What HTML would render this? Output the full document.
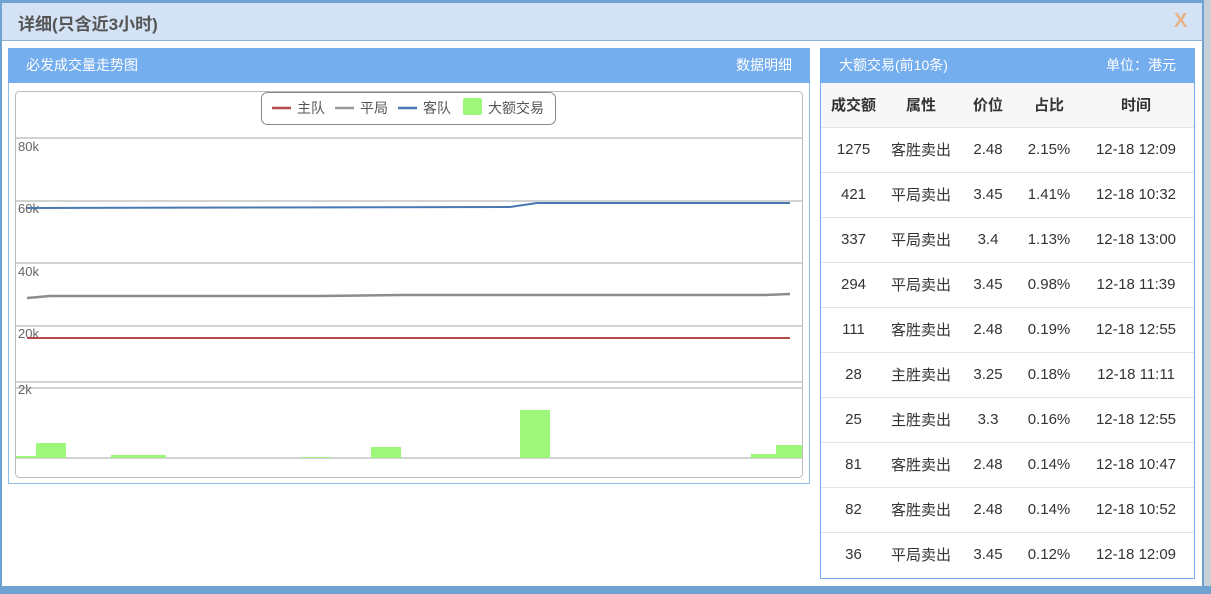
<!DOCTYPE html>
<html><head><meta charset="utf-8"><style>
*{margin:0;padding:0;box-sizing:border-box}
body{width:1211px;height:594px;overflow:hidden;background:#fff;font-family:"Liberation Sans","Noto Sans CJK SC",sans-serif;position:relative}
.abs{position:absolute}
.hd{background:#75aeee;color:#fff;font-size:14px;line-height:35px}
table{border-collapse:collapse;width:100%}
td{height:45px;text-align:center;font-size:15px;color:#333;border-top:1px solid #e4e4e4}
th{height:44px;font-size:15px;color:#333;background:#f7f7f7;font-weight:bold}
</style></head><body>
<div class="abs" style="left:0;top:0;width:1211px;height:3px;background:#6ea2d0"></div>
<div class="abs" style="left:0;top:0;width:2px;height:594px;background:#6ea2d0"></div>
<div class="abs" style="left:1203px;top:0;width:8px;height:594px;background:#c9cfd6"></div>
<div class="abs" style="left:1202px;top:0;width:2px;height:594px;background:#6ea2d0"></div>
<div class="abs" style="left:2px;top:3px;width:1200px;height:38px;background:#d3e2f5;border-bottom:1px solid #8fb3d6"></div>
<div class="abs" style="left:18px;top:10px;font-size:17px;font-weight:bold;color:#555">详细(只含近3小时)</div>
<div class="abs" style="left:1174px;top:10px;font-size:20px;font-weight:bold;color:#e8b486">X</div>
<div class="abs" style="left:0;top:586px;width:1211px;height:8px;background:#6ea2d0"></div>

<div class="abs" style="left:8px;top:48px;width:802px;height:436px;border:1px solid #8ebde8"></div>
<div class="abs hd" style="left:8px;top:48px;width:802px;height:35px;padding:0 18px">必发成交量走势图<span style="float:right">数据明细</span></div>
<svg class="abs" style="left:0;top:0" width="812" height="490">
<rect x="15.5" y="91.5" width="787" height="386" rx="4" fill="#fff" stroke="#bbb"/>
<g stroke="#c4c4c4" stroke-width="1.5">
<line x1="16" y1="138" x2="802" y2="138"/><line x1="16" y1="201" x2="802" y2="201"/>
<line x1="16" y1="263" x2="802" y2="263"/><line x1="16" y1="326" x2="802" y2="326"/>
<line x1="16" y1="382" x2="802" y2="382"/><line x1="16" y1="388" x2="802" y2="388"/>
<line x1="16" y1="458" x2="802" y2="458"/></g>
<g font-size="13" fill="#666" font-family="Liberation Sans"><text x="18" y="151">80k</text><text x="18" y="213">60k</text><text x="18" y="276">40k</text><text x="18" y="338">20k</text><text x="18" y="394">2k</text></g>
<polyline points="27,208 510,207 537,203 790,203" fill="none" stroke="#4a78b0" stroke-width="2"/>
<polyline points="27,298 50,296 320,296 400,295 765,295 790,294" fill="none" stroke="#8c8c8c" stroke-width="2.5"/>
<polyline points="27,338 790,338" fill="none" stroke="#b44a4a" stroke-width="2"/>
<g fill="#9ef77b"><rect x="16" y="456" width="20" height="2"/><rect x="36" y="443" width="30" height="15"/><rect x="111" y="455" width="55" height="3"/><rect x="301" y="457" width="30" height="1"/><rect x="371" y="447" width="30" height="11"/><rect x="520" y="410" width="30" height="48"/><rect x="751" y="454" width="25" height="4"/><rect x="776" y="445" width="26" height="13"/></g>
<rect x="261.5" y="92.5" width="294" height="32" rx="6" fill="#fff" stroke="#888"/>
<g stroke-width="2.5"><line x1="272" y1="108" x2="291" y2="108" stroke="#b44a4a"/><line x1="335" y1="108" x2="354" y2="108" stroke="#999"/><line x1="398" y1="108" x2="417" y2="108" stroke="#4a78b0"/></g>
<rect x="463" y="98" width="19" height="17" rx="2" fill="#9ef77b"/>
<g font-size="14" fill="#555" font-family="Liberation Sans,Noto Sans CJK SC"><text x="297" y="113">主队</text><text x="360" y="113">平局</text><text x="423" y="113">客队</text><text x="488" y="113">大额交易</text></g>
</svg>

<div class="abs" style="left:820px;top:48px;width:375px;height:531px;border:1px solid #75aeee">
<div class="hd" style="height:35px;margin:-1px -1px 0;padding:0 19px">大额交易(前10条)<span style="float:right">单位：港元</span></div>
<table><colgroup><col style="width:65px"><col style="width:70px"><col style="width:64px"><col style="width:58px"><col></colgroup>
<tr><th>成交额</th><th>属性</th><th>价位</th><th>占比</th><th>时间</th></tr>
<tr><td>1275</td><td>客胜卖出</td><td>2.48</td><td>2.15%</td><td>12-18 12:09</td></tr>
<tr><td>421</td><td>平局卖出</td><td>3.45</td><td>1.41%</td><td>12-18 10:32</td></tr>
<tr><td>337</td><td>平局卖出</td><td>3.4</td><td>1.13%</td><td>12-18 13:00</td></tr>
<tr><td>294</td><td>平局卖出</td><td>3.45</td><td>0.98%</td><td>12-18 11:39</td></tr>
<tr><td>111</td><td>客胜卖出</td><td>2.48</td><td>0.19%</td><td>12-18 12:55</td></tr>
<tr><td>28</td><td>主胜卖出</td><td>3.25</td><td>0.18%</td><td>12-18 11:11</td></tr>
<tr><td>25</td><td>主胜卖出</td><td>3.3</td><td>0.16%</td><td>12-18 12:55</td></tr>
<tr><td>81</td><td>客胜卖出</td><td>2.48</td><td>0.14%</td><td>12-18 10:47</td></tr>
<tr><td>82</td><td>客胜卖出</td><td>2.48</td><td>0.14%</td><td>12-18 10:52</td></tr>
<tr><td>36</td><td>平局卖出</td><td>3.45</td><td>0.12%</td><td>12-18 12:09</td></tr>
</table></div>
</body></html>
